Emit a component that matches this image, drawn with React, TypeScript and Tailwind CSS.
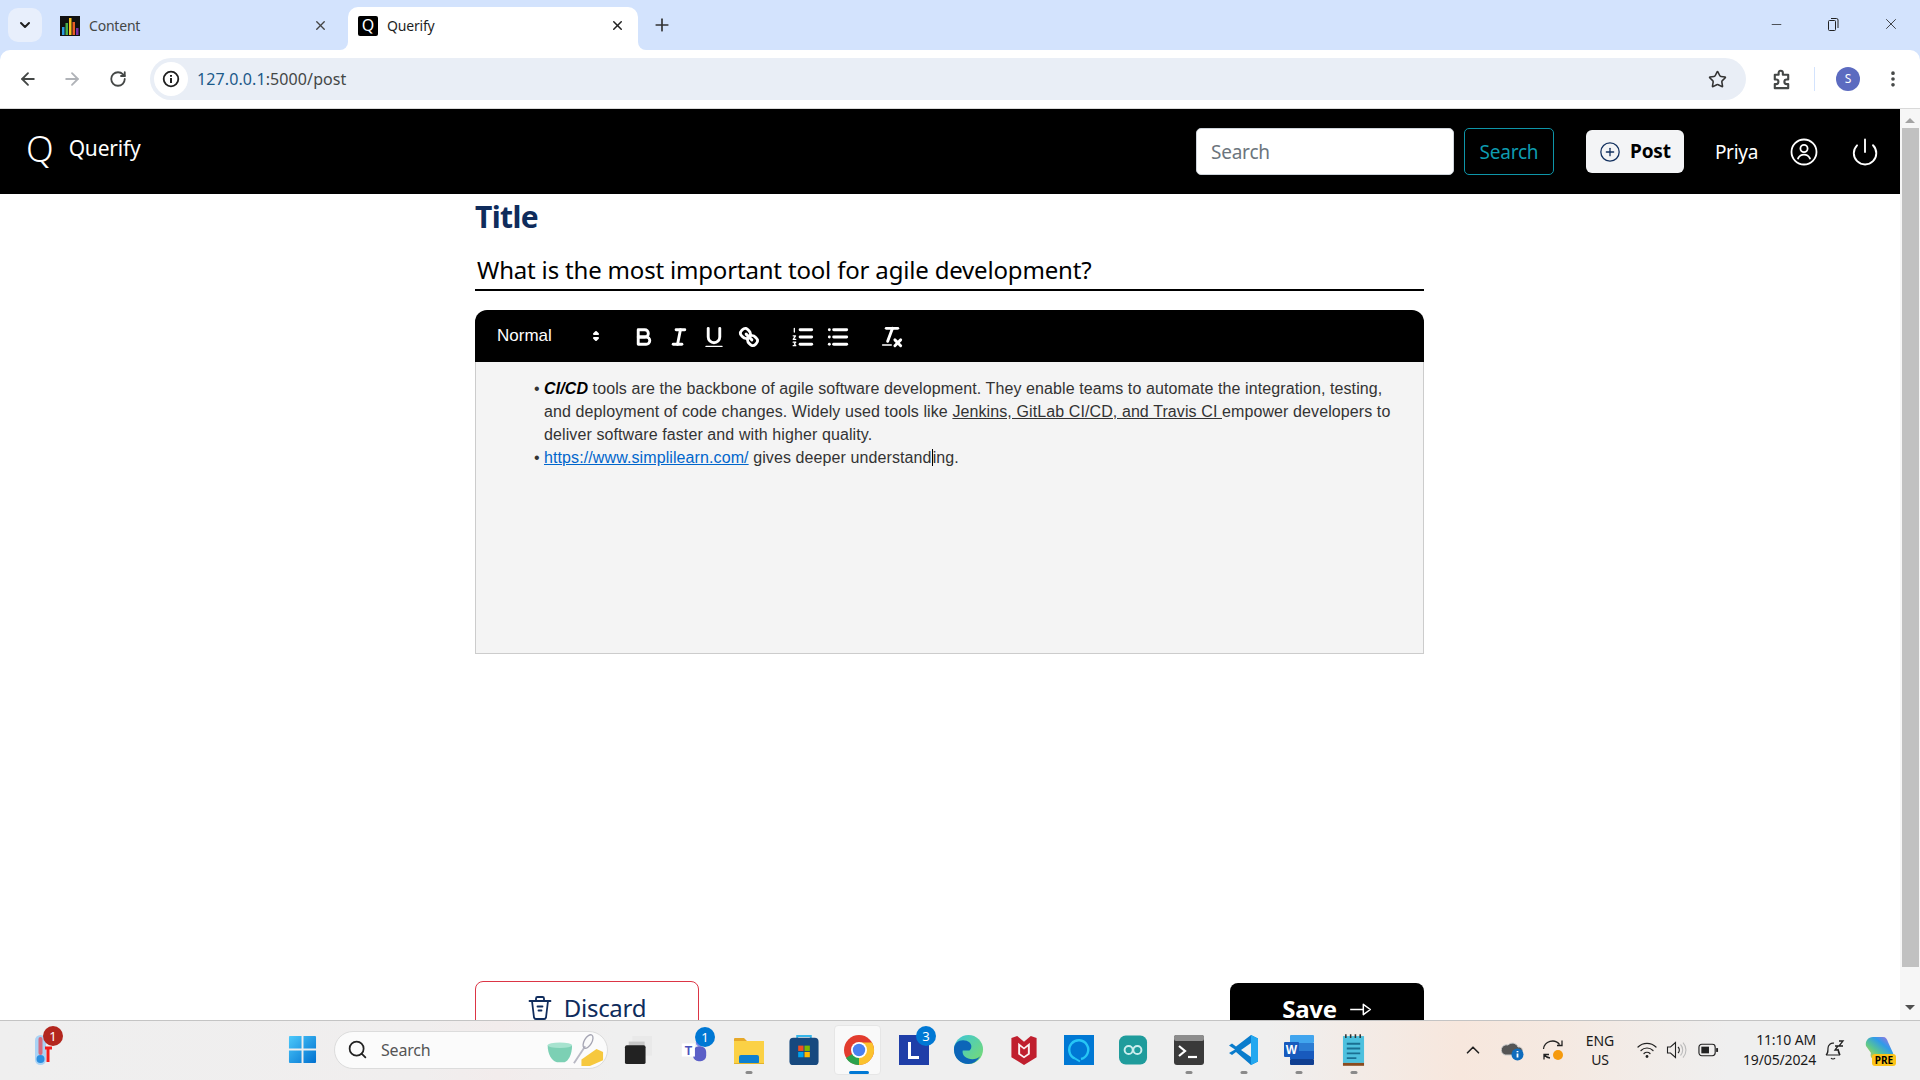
import React from "react";
import { ArrowLeft, ArrowRight, RotateCw, Star, X, Plus, ChevronDown, ChevronUp, Minus, EllipsisVertical, CirclePlus, Power, Search } from "lucide-react";

const sans = "font-['Noto_Sans',sans-serif]";

function Q({ children, cls = "" }: { children: React.ReactNode; cls?: string }) {
  return (
    <svg viewBox="0 0 18 18" className={`w-[26px] h-[26px] ${cls}`} fill="none" stroke="#fff" strokeWidth="2" strokeLinecap="round" strokeLinejoin="round">
      {children}
    </svg>
  );
}

function Slot({ children, cls = "" }: { children: React.ReactNode; cls?: string }) {
  return <div className={`relative w-[55px] h-[50px] shrink-0 flex items-center justify-center ${cls}`}>{children}</div>;
}

function Pip({ blue }: { blue?: boolean }) {
  return <span className={`absolute bottom-[1px] left-1/2 -translate-x-1/2 h-[3px] rounded-full ${blue ? "w-[20px] bg-[#0078d4]" : "w-[7px] bg-[#8a8a8a]"}`} />;
}

function Badge({ n, cls }: { n: string; cls: string }) {
  return <span className={`absolute rounded-full text-white text-center ${sans} ${cls}`}>{n}</span>;
}

export default function App() {
  return (
    <div className={`w-[1920px] h-[1080px] flex flex-col overflow-hidden bg-white ${sans}`}>
      {/* Tab strip */}
      <div className="h-[50px] shrink-0 bg-[#d3e3fd] flex items-end relative">
        <div className="w-[34px] h-[34px] ml-[8px] mb-[8px] rounded-[10px] bg-[#e8effc] flex items-center justify-center">
          <ChevronDown size={16} strokeWidth={3} color="#1f1f1f" />
        </div>
        <div className="w-[306px] h-[43px] flex items-center pl-[18px] pb-[6px] shrink-0">
          <svg viewBox="0 0 20 20" className="w-[20px] h-[20px]">
            <rect width="20" height="20" fill="#111" />
            <rect x="2" y="11" width="2.5" height="8" fill="#2b9be0" />
            <rect x="5.5" y="7" width="2.5" height="12" fill="#49b04a" />
            <rect x="9" y="2" width="2.5" height="17" fill="#f6c21c" />
            <rect x="12.5" y="6" width="2.5" height="13" fill="#e85d25" />
            <rect x="16" y="12" width="2.5" height="7" fill="#7b2fa8" />
          </svg>
          <span className="ml-[9px] text-[14px] text-[#444746] tracking-[-0.2px]">Content</span>
          <X size={15} strokeWidth={2.2} color="#444" className="ml-auto mr-[20px]" />
        </div>
        <div className="relative w-[290px] h-[43px] bg-white rounded-t-[10px] flex items-center pl-[10px] pb-[6px] shrink-0">
          <span className="absolute -left-[8px] bottom-0 w-[8px] h-[8px] bg-white"><span className="block w-[8px] h-[8px] bg-[#d3e3fd] rounded-br-[8px]" /></span>
          <span className="absolute -right-[8px] bottom-0 w-[8px] h-[8px] bg-white"><span className="block w-[8px] h-[8px] bg-[#d3e3fd] rounded-bl-[8px]" /></span>
          <span className="w-[20px] h-[20px] bg-black rounded-[2px] text-white text-[16px] leading-[19px] text-center">Q</span>
          <span className="ml-[9px] text-[14px] text-[#1f1f1f] tracking-[-0.2px]">Querify</span>
          <X size={15} strokeWidth={2.4} color="#222" className="ml-auto mr-[13px]" />
        </div>
        <Plus size={20} strokeWidth={2} color="#333" className="ml-[14px] mb-[15px] shrink-0" />
        <div className="ml-auto flex items-center mb-[17px] mr-[20px] gap-[42px]">
          <Minus size={15} strokeWidth={1.2} color="#222" />
          <svg viewBox="0 0 14 14" className="w-[14px] h-[14px]" fill="none" stroke="#222" strokeWidth="1">
            <rect x="2.5" y="3.5" width="7" height="10" rx="1" />
            <path d="M5 1.5h5.5a1.5 1.5 0 0 1 1.5 1.5v8" />
          </svg>
          <X size={18} strokeWidth={1.1} color="#222" />
        </div>
      </div>

      {/* Browser toolbar */}
      <div className="h-[59px] shrink-0 bg-[#d3e3fd]">
        <div className="h-[58px] bg-white rounded-t-[10px] flex items-center relative">
          <ArrowLeft size={20} strokeWidth={2.2} color="#444746" className="ml-[18px]" />
          <ArrowRight size={20} strokeWidth={2.2} color="#b0b3b8" className="ml-[24px]" />
          <RotateCw size={18} strokeWidth={2.4} color="#444746" className="ml-[27px]" />
          <div className="ml-[23px] w-[1596px] h-[42px] rounded-full bg-[#e9eef6] flex items-center pl-[4px]">
            <span className="w-[34px] h-[34px] rounded-full bg-white flex items-center justify-center">
              <svg viewBox="0 0 18 18" className="w-[18px] h-[18px]" fill="none" stroke="#1f1f1f" strokeWidth="1.8">
                <circle cx="9" cy="9" r="7.3" />
                <path d="M9 8v5M9 5v1.8" strokeWidth="2" />
              </svg>
            </span>
            <span className="ml-[9px] text-[16px] tracking-[0.1px] text-[#1f1f1f]">
              <span className="text-[#1c5a8a]">127.0.0.1</span>
              <span className="text-[#444746]">:5000/post</span>
            </span>
            <Star size={19} strokeWidth={2} color="#333" className="ml-auto mr-[19px]" />
          </div>
          <svg viewBox="0 0 24 24" className="w-[23px] h-[23px] ml-[24px]" fill="none" stroke="#444746" strokeWidth="2.2" strokeLinejoin="round">
            <path d="M5 7h4V5a2.2 2.2 0 0 1 4.4 0v2H19v5h-1.6a2.4 2.4 0 0 0 0 4.8H19V21H5v-4.2h1.4a2.4 2.4 0 0 0 0-4.8H5z" />
          </svg>
          <span className="ml-[21px] w-[1px] h-[24px] bg-[#d3e3fd]" />
          <span className="ml-[21px] w-[24px] h-[24px] rounded-full bg-[#5c6bc0] text-white text-[12px] leading-[24px] text-center">S</span>
          <EllipsisVertical size={20} strokeWidth={2.4} color="#444746" className="ml-[23px]" />
        </div>
        <div className="h-[1px] bg-[#d9d9d9]" />
      </div>

      {/* Page and scrollbar */}
      <div className="flex-1 min-h-0 flex">
        <div className="flex-1 min-w-0 overflow-hidden flex flex-col">
          <nav className="h-[85px] shrink-0 bg-black flex items-center pl-[26px] pr-[20px]">
            <span className="text-white text-[36px] leading-none font-light -mt-[5px]">Q</span>
            <span className="ml-[15px] text-white text-[21px] tracking-[-0.2px] -mt-[6px]">Querify</span>
            <div className="ml-auto flex items-center">
              <div className="w-[258px] h-[47px] rounded-[5px] bg-white border border-[#ced4da] flex items-center pl-[14px] pt-[2px] text-[19px] text-[#6c757d] tracking-[-0.2px]">Search</div>
              <div className="ml-[10px] w-[90px] h-[47px] rounded-[5px] border border-[#0e95a8] flex items-center justify-center pt-[2px] text-[19px] text-[#0e9cb0] tracking-[-0.2px]">Search</div>
              <div className="ml-[32px] w-[98px] h-[43px] rounded-[6px] bg-[#f3f4f6] flex items-center justify-center gap-[9px] text-[19px] font-bold text-black tracking-[-0.2px]">
                <CirclePlus size={22} strokeWidth={1.4} color="#12305f" />
                Post
              </div>
              <span className="ml-[31px] text-white text-[19px] tracking-[-0.3px] pt-[1px]">Priya</span>
              <svg viewBox="0 0 28 28" className="w-[28px] h-[28px] ml-[32px]" fill="none" stroke="#fff" strokeWidth="1.8" strokeLinecap="round">
                <circle cx="14" cy="14" r="12.5" />
                <circle cx="14" cy="10.5" r="3.6" />
                <path d="M8 20.5c1.4-2.6 3.4-3.8 6-3.8s4.6 1.2 6 3.8" />
              </svg>
              <Power size={30} strokeWidth={1.5} color="#fff" className="ml-[32px]" />
            </div>
          </nav>

          <div className="w-[949px] ml-[475px] shrink-0">
            <h1 className="text-[30px] leading-[40px] font-bold text-[#0f2c5c] mt-[3px] tracking-[-0.6px]">Title</h1>
            <div className="mt-[14px] h-[40px] border-b-2 border-black pl-[2px] pt-[3px] text-[24px] leading-[32px] text-black tracking-[-0.18px]">What is the most important tool for agile development?</div>

            <div className="mt-[19px] font-['Liberation_Sans',sans-serif]">
              <div className="h-[52px] bg-black rounded-t-[12px] flex items-center text-white pl-[22px]">
                <span className="text-[17px] w-[99px]">Normal</span>
                <svg viewBox="0 0 18 18" className="w-[18px] h-[18px] -ml-[9px]" fill="#fff">
                  <polygon points="7 11 9 13 11 11" stroke="#fff" strokeWidth="2" strokeLinejoin="round" />
                  <polygon points="7 7 9 5 11 7" stroke="#fff" strokeWidth="2" strokeLinejoin="round" />
                </svg>
                <div className="ml-[26px] mt-[1px] flex items-center gap-[9px]">
                  <Q>
                    <path d="M5,4H9.5A2.5,2.5,0,0,1,12,6.5v0A2.5,2.5,0,0,1,9.5,9H5A0,0,0,0,1,5,9V4A0,0,0,0,1,5,4Z" />
                    <path d="M5,9h5.5A2.5,2.5,0,0,1,13,11.5v0A2.5,2.5,0,0,1,10.5,14H5a0,0,0,0,1,0,0V9A0,0,0,0,1,5,9Z" />
                  </Q>
                  <Q>
                    <line x1="7" x2="13" y1="4" y2="4" />
                    <line x1="5" x2="11" y1="14" y2="14" />
                    <line x1="8" x2="10" y1="14" y2="4" />
                  </Q>
                  <Q>
                    <path d="M5,3V9a4.012,4.012,0,0,0,4,4H9a4.012,4.012,0,0,0,4-4V3" />
                    <rect height="1" rx=".5" ry=".5" width="12" x="3" y="15" fill="#fff" stroke="none" />
                  </Q>
                  <Q>
                    <line x1="7" x2="11" y1="7" y2="11" />
                    <path d="M8.9,4.577a3.476,3.476,0,0,1,.36,4.679A3.476,3.476,0,0,1,4.577,8.9C3.185,7.5,2.035,6.4,4.217,4.217S7.5,3.185,8.9,4.577Z" />
                    <path d="M13.423,9.1a3.476,3.476,0,0,0-4.679-.36,3.476,3.476,0,0,0,.36,4.679c1.392,1.392,2.5,2.542,4.679.36S14.815,10.5,13.423,9.1Z" />
                  </Q>
                </div>
                <div className="ml-[28px] mt-[1px] flex items-center gap-[9px]">
                  <Q>
                    <line x1="7" x2="15" y1="4" y2="4" />
                    <line x1="7" x2="15" y1="9" y2="9" />
                    <line x1="7" x2="15" y1="14" y2="14" />
                    <path d="M3 3v2.6M2.2 8.2h1.6L2.2 10.6h1.8M2.2 12.6h1.8l-1 1.2 1 1.2H2.2" strokeWidth="0.9" />
                  </Q>
                  <Q>
                    <line x1="6" x2="15" y1="4" y2="4" />
                    <line x1="6" x2="15" y1="9" y2="9" />
                    <line x1="6" x2="15" y1="14" y2="14" />
                    <line x1="3" x2="3" y1="4" y2="4" />
                    <line x1="3" x2="3" y1="9" y2="9" />
                    <line x1="3" x2="3" y1="14" y2="14" />
                  </Q>
                </div>
                <Q cls="ml-[28px] mt-[1px]">
                  <line x1="5" x2="13" y1="3" y2="3" />
                  <line x1="6" x2="9.35" y1="12" y2="3" />
                  <line x1="11" x2="15" y1="11" y2="15" />
                  <line x1="15" x2="11" y1="11" y2="15" />
                  <rect height="1" rx=".5" ry=".5" width="7" x="2" y="14" fill="#fff" stroke="none" />
                </Q>
              </div>
              <div className="h-[292px] bg-[#f4f4f4] border border-t-0 border-[#cccccc] pt-[15px] pl-[58px] pr-[20px] text-[16px] leading-[23px] text-[#333] tracking-[0.1px]">
                <div className="flex">
                  <span className="w-[10px] shrink-0">•</span>
                  <div>
                    <b className="italic text-black">CI/CD</b> tools are the backbone of agile software development. They enable teams to automate the integration, testing, and deployment of code changes. Widely used tools like <u>Jenkins, GitLab CI/CD, and Travis CI </u>empower developers to deliver software faster and with higher quality.
                  </div>
                </div>
                <div className="flex">
                  <span className="w-[10px] shrink-0">•</span>
                  <div>
                    <a className="text-[#0066cc] underline">https://www.simplilearn.com/</a> gives deeper understand<span className="border-l border-black" />ing.
                  </div>
                </div>
              </div>
            </div>

            <div className="mt-[327px] flex items-start justify-between">
              <div className="w-[224px] h-[54px] rounded-[8px] border border-[#dc3545] flex items-center justify-center gap-[12px] text-[24px] text-[#0f2c5c] tracking-[-0.3px]">
                <svg viewBox="0 0 24 26" className="w-[24px] h-[26px]" fill="none" stroke="#0f2c5c" strokeWidth="1.8" strokeLinecap="round" strokeLinejoin="round">
                  <path d="M1.5 6h21M4 6l2 16.5a2 2 0 0 0 2 1.5h8a2 2 0 0 0 2-1.5L20 6M8 6V3.5A1.5 1.5 0 0 1 9.5 2h5A1.5 1.5 0 0 1 16 3.5V6M9.5 11.5h5M10.5 15.5h3" />
                </svg>
                Discard
              </div>
              <div className="mt-[2px] w-[194px] h-[52px] rounded-[8px] bg-black flex items-center justify-center gap-[12px] text-[24px] font-bold text-white tracking-[-0.3px]">
                Save
                <svg viewBox="0 0 24 16" className="w-[23px] h-[15px]" fill="none" stroke="#fff" strokeWidth="1.6" strokeLinejoin="round">
                  <path d="M1 8h14M15 2.5L22.5 8 15 13.5z" />
                </svg>
              </div>
            </div>
          </div>
        </div>

        {/* Scrollbar */}
        <div className="w-[20px] shrink-0 bg-[#f6f6f6] flex flex-col items-center">
          <span className="mt-[9px] w-0 h-0 border-x-[5px] border-x-transparent border-b-[5px] border-b-[#a3a3a3]" />
          <div className="mt-[5px] w-[17px] h-[839px] bg-[#c1c1c1]" />
          <span className="mt-[38px] w-0 h-0 border-x-[5px] border-x-transparent border-t-[5px] border-t-[#505050]" />
        </div>
      </div>

      {/* Taskbar */}
      <div className="h-[60px] shrink-0 border-t border-[#c4c4c4] bg-[linear-gradient(90deg,#efefef_0%,#f0eeee_22%,#f2ecec_26%,#efefef_32%,#efefef_66%,#f7e7dd_76%,#f5e9e1_81%,#efefef_90%)] flex items-center pb-[2px]">
        <Slot cls="ml-[16px]">
          <svg viewBox="0 0 30 34" className="w-[30px] h-[34px]">
            <rect x="6" y="2" width="11" height="30" rx="5.5" fill="#a9d3f5" />
            <rect x="9.5" y="4" width="4" height="18" rx="2" fill="#d66b7f" />
            <circle cx="11.5" cy="26" r="4" fill="#2b8fe0" />
            <path d="M19 15v14" stroke="#f01c1c" strokeWidth="3" />
            <path d="M16 15h7" stroke="#f01c1c" strokeWidth="3" />
          </svg>
          <Badge n="1" cls="left-[27px] top-[1px] w-[20px] h-[20px] leading-[20px] text-[13px] bg-[#b3261e]" />
        </Slot>
        <Slot cls="ml-[204px]">
          <svg viewBox="0 0 30 30" className="w-[29px] h-[29px]">
            <defs>
              <linearGradient id="wg" x1="0" y1="0" x2="1" y2="1">
                <stop offset="0" stopColor="#4cc9fb" />
                <stop offset="1" stopColor="#0070cf" />
              </linearGradient>
            </defs>
            <path d="M1 2a1 1 0 0 1 1-1h12v13H1zM16 1h12a1 1 0 0 1 1 1v12H16zM1 16h13v13H2a1 1 0 0 1-1-1zM16 16h13v12a1 1 0 0 1-1 1H16z" fill="url(#wg)" />
          </svg>
        </Slot>
        <div className="ml-[4px] w-[274px] h-[38px] rounded-full bg-[#fbfbfb] border border-[#dcdcdc] flex items-center pl-[12px] shrink-0 relative">
          <Search size={21} strokeWidth={2} color="#222" />
          <span className="ml-[13px] text-[16px] text-[#555] tracking-[-0.2px]">Search</span>
          <svg viewBox="0 0 66 36" className="absolute right-[3px] top-[1px] w-[62px] h-[34px]">
            <path d="M6 13h26c0 10-4 17-8 18h-8C10 30 6 22 6 13z" fill="#7cd0b4" />
            <ellipse cx="19" cy="13" rx="13" ry="3" fill="#a7e3cf" />
            <path d="M34 32L46 14" stroke="#b9b9c4" strokeWidth="2" />
            <ellipse cx="49" cy="9" rx="4" ry="8" transform="rotate(30 49 9)" fill="none" stroke="#a5a5b3" strokeWidth="1.4" />
            <path d="M42 28l16-11 7 3v9l-14 6h-9z" fill="#f6c83e" />
          </svg>
        </div>
        <Slot cls="ml-[3px]">
          <svg viewBox="0 0 32 34" className="w-[30px] h-[32px]">
            <rect x="9" y="2" width="21" height="21" fill="#e9e9e9" />
            <rect x="5" y="8" width="17" height="14" fill="#c8c8c8" />
            <rect x="1" y="12" width="22" height="20" rx="2" fill="#222" />
          </svg>
        </Slot>
        <Slot>
          <svg viewBox="0 0 32 32" className="w-[30px] h-[30px]">
            <circle cx="22" cy="8" r="4" fill="#7b83eb" />
            <rect x="15" y="12" width="14" height="16" rx="6" fill="#5b5fc7" />
            <rect x="3" y="9" width="14" height="14" fill="#fff" />
            <text x="10" y="21" fontSize="13" fontWeight="700" textAnchor="middle" fill="#4b53bc" fontFamily="Liberation Sans">T</text>
          </svg>
          <Badge n="1" cls="left-[29px] top-[2px] w-[20px] h-[20px] leading-[20px] text-[13px] bg-[#0078d4]" />
        </Slot>
        <Slot>
          <svg viewBox="0 0 32 32" className="w-[32px] h-[32px]">
            <path d="M1 5a1 1 0 0 1 1-1h9l3 3h2v6H1z" fill="#e6a829" />
            <path d="M1 7h30v23H1z" fill="#fbd145" />
            <rect x="6" y="21" width="20" height="9" rx="2" fill="#0d7fd0" />
            <rect x="1" y="29" width="30" height="1" fill="#e3b32a" />
          </svg>
          <Pip />
        </Slot>
        <Slot>
          <svg viewBox="0 0 30 34" className="w-[30px] h-[33px]">
            <path d="M8 6V3h14v3" fill="none" stroke="#36b6ea" strokeWidth="2" />
            <rect x="0" y="5" width="30" height="28" rx="4" fill="#17497f" />
            <rect x="9" y="13" width="5.5" height="5.5" fill="#f25022" />
            <rect x="15.5" y="13" width="5.5" height="5.5" fill="#7fba00" />
            <rect x="9" y="19.5" width="5.5" height="5.5" fill="#00a4ef" />
            <rect x="15.5" y="19.5" width="5.5" height="5.5" fill="#ffb900" />
          </svg>
        </Slot>
        <Slot>
          <span className="absolute left-[3px] top-[0px] w-[47px] h-[50px] rounded-[4px] bg-[#f9f9f9] border border-[#e6e6e6]" />
          <svg viewBox="0 0 32 32" className="relative w-[32px] h-[32px]">
            <circle cx="16" cy="16" r="15" fill="#e23c2e" />
            <path d="M16 16L3 24A15 15 0 0 0 16 31z" fill="#2ba24c" />
            <path d="M16 16L16 31A15 15 0 0 0 29 8.5L16 8.5z" fill="#fbc22d" />
            <circle cx="16" cy="16" r="8" fill="#fff" />
            <circle cx="16" cy="16" r="6.2" fill="#4a80f0" />
          </svg>
          <Pip blue />
        </Slot>
        <Slot>
          <svg viewBox="0 0 30 30" className="w-[30px] h-[30px]">
            <rect width="30" height="30" fill="#1f3ea8" />
            <path d="M9 7h3v14h8v3H9z" fill="#fff" />
          </svg>
          <Badge n="3" cls="left-[30px] top-[1px] w-[20px] h-[20px] leading-[20px] text-[13px] bg-[#0078d4]" />
        </Slot>
        <Slot>
          <svg viewBox="0 0 32 32" className="w-[31px] h-[31px]">
            <defs>
              <linearGradient id="eg" x1="0" y1="0" x2="1" y2="1">
                <stop offset="0" stopColor="#3bc6d9" />
                <stop offset="1" stopColor="#7cdc6c" />
              </linearGradient>
            </defs>
            <circle cx="16" cy="16" r="15" fill="url(#eg)" />
            <path d="M1 16C1 8 8 5 14 7c6 2 6 8 3 10h-7c-1 5 4 9 10 9 3 0 6-1 8-3-3 5-7 8-12 8C8 31 1 25 1 16z" fill="#0c65b8" />
          </svg>
        </Slot>
        <Slot>
          <svg viewBox="0 0 28 32" className="w-[28px] h-[31px]">
            <path d="M1 4l6-2 7 6 7-6 6 2v20l-13 8L1 24z" fill="#c01f2e" />
            <path d="M8 9l6 5 6-5v12l-6 4-6-4z" fill="#fff" opacity="0.95" />
            <path d="M10 13l4 3 4-3v7l-4 3-4-3z" fill="#c01f2e" />
          </svg>
        </Slot>
        <Slot>
          <svg viewBox="0 0 30 30" className="w-[30px] h-[30px]">
            <rect width="30" height="30" fill="#0078d4" />
            <path d="M11 23.5A9.5 9.5 0 1 1 17 24" fill="none" stroke="#26c6f5" strokeWidth="2.4" />
            <path d="M11 23.5l5 3" stroke="#26c6f5" strokeWidth="2" />
          </svg>
        </Slot>
        <Slot>
          <svg viewBox="0 0 30 30" className="w-[29px] h-[30px]">
            <rect width="29" height="30" rx="7" fill="#1f9c9c" />
            <circle cx="10" cy="15" r="4.2" fill="none" stroke="#cdeeee" strokeWidth="2" />
            <circle cx="19" cy="15" r="4.2" fill="none" stroke="#cdeeee" strokeWidth="2" />
          </svg>
        </Slot>
        <Slot>
          <svg viewBox="0 0 30 30" className="w-[30px] h-[30px]">
            <rect width="30" height="30" rx="3" fill="#3a3a3a" />
            <rect width="30" height="6" rx="2" fill="#8d8d8d" />
            <path d="M5 11l6 5-6 5" fill="none" stroke="#fff" strokeWidth="2.2" />
            <path d="M14 22h9" stroke="#fff" strokeWidth="2.2" />
          </svg>
          <Pip />
        </Slot>
        <Slot>
          <svg viewBox="0 0 30 32" className="w-[30px] h-[32px]">
            <path d="M22 1l7 3.5v23L22 31 7 18l-4 3-3-2 6-3.5-6-4 3-2 4 3z" fill="#0a7ccc" />
            <path d="M22 1l7 3.5v23L22 31z" fill="#23a8f0" />
            <path d="M22 9L12 16l10 7z" fill="#f0f0f0" />
          </svg>
          <Pip />
        </Slot>
        <Slot>
          <svg viewBox="0 0 30 32" className="w-[30px] h-[32px]">
            <rect x="6" y="1" width="24" height="8" rx="1" fill="#41a5ee" />
            <rect x="6" y="9" width="24" height="8" fill="#2b7cd3" />
            <rect x="6" y="17" width="24" height="8" fill="#185abd" />
            <rect x="6" y="25" width="24" height="6" rx="1" fill="#103f91" />
            <rect x="0" y="8" width="15" height="15" rx="1" fill="#185abd" />
            <text x="7.5" y="20" fontSize="12" fontWeight="700" textAnchor="middle" fill="#fff" fontFamily="Liberation Sans">W</text>
          </svg>
          <Pip />
        </Slot>
        <Slot>
          <svg viewBox="0 0 24 34" className="w-[23px] h-[33px]">
            <rect x="1" y="3" width="22" height="28" fill="#4dc0de" />
            <rect x="1" y="31" width="22" height="3" fill="#8a4b1f" />
            <path d="M4 1v4M9 1v4M14 1v4M19 1v4" stroke="#333" strokeWidth="1.6" />
            <path d="M5 11h14M5 16h14M5 21h14M5 26h10" stroke="#1a6f92" strokeWidth="2" />
          </svg>
          <Pip />
        </Slot>

        <ChevronUp size={22} strokeWidth={1.8} color="#222" className="ml-[81px] shrink-0" />
        <svg viewBox="0 0 24 24" className="w-[24px] h-[24px] ml-[17px] shrink-0">
          <path d="M4 17a5 5 0 0 1 3-10 6 6 0 0 1 10 2 4 4 0 0 1 1 8z" fill="#555" stroke="#ccc" />
          <circle cx="16.5" cy="16.5" r="6" fill="#0f6cbd" />
          <path d="M16.5 15.5v4M16.5 13v1.2" stroke="#fff" strokeWidth="1.8" />
        </svg>
        <svg viewBox="0 0 24 24" className="w-[24px] h-[24px] ml-[16px] shrink-0" fill="none" stroke="#222" strokeWidth="1.3">
          <path d="M2.5 11a9 9 0 0 1 16-4.5M21 2.5v5h-5" />
          <path d="M9 20a9 9 0 0 1-6-3.5M3 21.5v-5h5" />
          <circle cx="17" cy="17" r="5" fill="#f59a0d" stroke="none" />
        </svg>
        <div className="w-[40px] ml-[15px] shrink-0 text-center text-[14px] leading-[19px] text-[#1a1a1a] tracking-[-0.1px]">
          ENG<br />US
        </div>
        <svg viewBox="0 0 20 20" className="w-[20px] h-[20px] ml-[17px] shrink-0" fill="none" stroke="#222" strokeWidth="1.2" strokeLinecap="round">
          <path d="M1 7a13 13 0 0 1 18 0M4 10.5a8.5 8.5 0 0 1 12 0M7 13.5a4.2 4.2 0 0 1 6 0" />
          <circle cx="10" cy="16.5" r="1.4" fill="#222" stroke="none" />
        </svg>
        <svg viewBox="0 0 22 20" className="w-[22px] h-[20px] ml-[9px] shrink-0" fill="none" stroke="#222" strokeWidth="1.1">
          <path d="M1.5 7h3l5-4.5v15l-5-4.5h-3z" />
          <path d="M12 7a4 4 0 0 1 0 6" />
          <path d="M14.5 4.5a8 8 0 0 1 0 11M17 2.5a11 11 0 0 1 0 15" stroke="#bbb" />
        </svg>
        <svg viewBox="0 0 22 14" className="w-[21px] h-[14px] ml-[10px] shrink-0" fill="none" stroke="#222" strokeWidth="1.2">
          <rect x="1" y="1" width="17" height="12" rx="3" />
          <rect x="3.5" y="3.5" width="8" height="7" fill="#222" stroke="none" />
          <path d="M20 5v4" strokeWidth="2" />
        </svg>
        <div className="w-[90px] ml-[7px] shrink-0 text-right text-[14px] leading-[20px] text-[#1a1a1a] tracking-[-0.15px]">
          11:10 AM<br />19/05/2024
        </div>
        <svg viewBox="0 0 22 22" className="w-[22px] h-[22px] ml-[7px] shrink-0" fill="none" stroke="#222" strokeWidth="1.2">
          <path d="M3 16c2-2 2-3 2-7a5 5 0 0 1 6-4.8M15 10c0 3 0 4 2 6zM3 16h14M8 19a2.5 2.5 0 0 0 4 0" />
          <path d="M12 7h3l-3 4h3M16 2h4l-4 5h4" strokeWidth="1.3" />
        </svg>
        <div className="relative ml-[20px] w-[30px] h-[30px] shrink-0">
          <svg viewBox="0 0 30 26" className="w-[30px] h-[26px]">
            <defs>
              <linearGradient id="cg" x1="0" y1="1" x2="1" y2="0">
                <stop offset="0" stopColor="#f7c53c" />
                <stop offset="0.35" stopColor="#5ec98a" />
                <stop offset="0.65" stopColor="#2f9bea" />
                <stop offset="1" stopColor="#c766d8" />
              </linearGradient>
            </defs>
            <path d="M8 2h10c3 0 4 2 5 5l5 11c1 3-1 6-5 6H10c-4 0-5-3-4-6L1 11C0 6 3 2 8 2z" fill="url(#cg)" />
          </svg>
          <span className="absolute left-[7px] top-[19px] w-[24px] h-[12px] rounded-[3px] bg-[#fcc419] text-[10px] leading-[12px] font-bold text-center text-black">PRE</span>
        </div>
      </div>
    </div>
  );
}
